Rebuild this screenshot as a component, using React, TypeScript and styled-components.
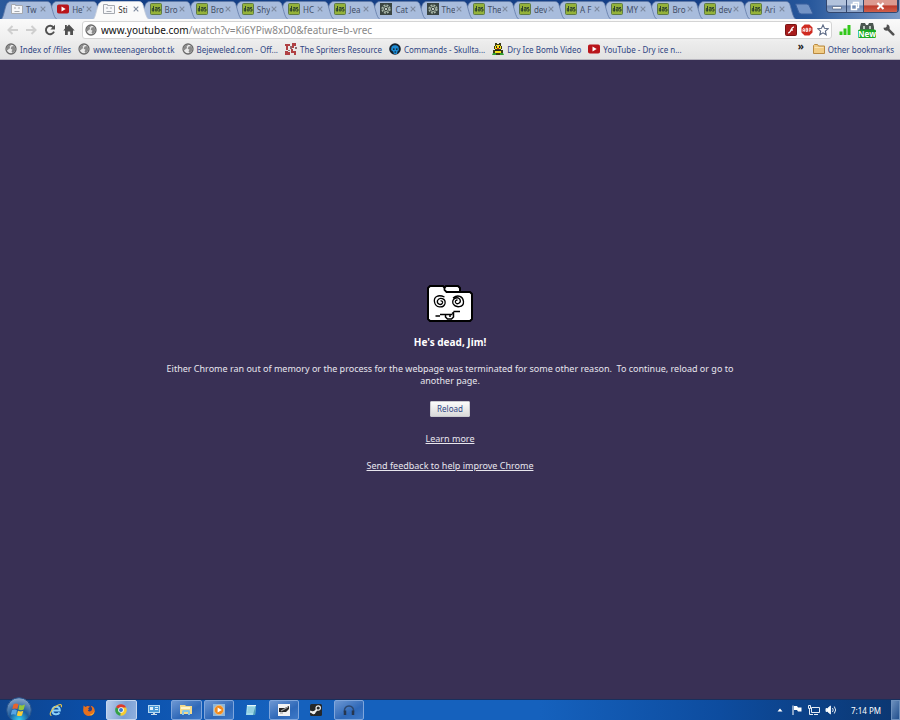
import React from "react";
import styled, { createGlobalStyle, css } from "styled-components";

const Global = createGlobalStyle`
  * { box-sizing: border-box; }
  body { margin: 0; font-family: "Noto Sans", "Open Sans", sans-serif; font-size: 8px; }
  button, input { font: inherit; }
  svg { display: block; flex: none; }
`;

const Window = styled.div`
  min-height: 100vh;
  display: flex;
  flex-direction: column;
  background: #393055;
`;

/* ---------- tab strip ---------- */
const TabStrip = styled.header`
  display: flex;
  align-items: flex-start;
  height: 19px;
  padding-left: 5px;
  background: linear-gradient(90deg, #2b5a9c 0, #133f85 8%, #153f86 80%, #28589c 90%, #7d9cc8 100%);
`;
const Tabs = styled.nav`
  display: flex;
  flex: 1;
  min-width: 0;
  isolation: isolate;
`;
const Tab = styled.button<{ $active?: boolean; $order: number }>`
  position: relative;
  z-index: ${(p) => (p.$active ? 100 : p.$order)};
  flex: 1 1 0;
  min-width: 0;
  height: 19px;
  display: flex;
  align-items: center;
  gap: 1px;
  padding: 0 5px 1px 6px;
  border: 0;
  background: none;
  color: ${(p) => (p.$active ? "#333" : "#414e66")};
  text-align: left;
`;
const TabShape = styled.svg`
  position: absolute;
  z-index: -1;
  inset: 1px -6px 0 -4px;
  width: calc(100% + 10px);
  height: 18px;
`;
const TabLabel = styled.span`
  flex: 1;
  min-width: 0;
  overflow: hidden;
  white-space: nowrap;
  padding-left: 2px;
`;
const NewTab = styled.button`
  width: 20px;
  height: 12px;
  margin: 3px 12px 0 4px;
  padding: 0;
  border: 0;
  background: none;
`;
const WindowButtons = styled.div`
  display: flex;
  height: 13px;
  margin-right: 1px;
  border: 1px solid #33476e;
  border-top: 0;
  border-radius: 0 0 4px 4px;
  overflow: hidden;
`;
const WindowButton = styled.button<{ $kind: "min" | "max" | "close" }>`
  display: grid;
  place-items: center;
  padding: 0;
  border: 0;
  border-right: 1px solid #33476e;
  width: ${(p) => (p.$kind === "close" ? 34 : p.$kind === "min" ? 20 : 17)}px;
  background: ${(p) =>
    p.$kind === "close"
      ? "linear-gradient(#dc9a90 0 40%, #bd3a2b 50%, #d0604c)"
      : "linear-gradient(#b3c3dc 0 40%, #6f88b2 50%, #92a8cb)"};
`;

/* ---------- toolbar ---------- */
const Toolbar = styled.div`
  display: flex;
  align-items: center;
  height: 22px;
  gap: 7px;
  padding: 0 5px 0 6px;
  background: linear-gradient(#fafafa, #eeeeee);
`;
const ToolButton = styled.button<{ $wide?: boolean }>`
  display: grid;
  place-items: center;
  width: ${(p) => (p.$wide ? 18 : 12)}px;
  height: 18px;
  padding: 0;
  border: 0;
  background: none;
`;
const Omnibox = styled.div`
  flex: 1;
  min-width: 0;
  height: 18px;
  display: flex;
  align-items: center;
  gap: 4px;
  padding: 0 2px;
  border: 1px solid #d4d4d4;
  border-radius: 3px;
  background: #fff;
`;
const AddressField = styled.label`
  position: relative;
  flex: 1;
  min-width: 0;
  height: 16px;
  font-size: 10px;
  line-height: 16px;
  white-space: nowrap;
  overflow: hidden;
  color: #888;
  b { font-weight: 400; color: #111; }
`;
const AddressInput = styled.input`
  position: absolute;
  inset: 0;
  width: 100%;
  border: 0;
  padding: 0;
  outline: 0;
  background: none;
  color: transparent;
`;

/* ---------- bookmarks ---------- */
const Bookmarks = styled.nav`
  display: flex;
  align-items: center;
  height: 19px;
  gap: 7px;
  padding: 0 6px 2px 5px;
  background: linear-gradient(#ededed, #e2e2e2);
  border-bottom: 1px solid #b8b6bf;
`;
const Bookmark = styled.a`
  display: flex;
  align-items: center;
  gap: 3px;
  color: #2f4583;
  text-decoration: none;
  white-space: nowrap;
`;
const Overflow = styled.button`
  margin-left: auto;
  padding: 0 2px 6px;
  border: 0;
  background: none;
  font-size: 10px;
  font-weight: 700;
  line-height: 10px;
  color: #222;
`;

/* ---------- page ---------- */
const Page = styled.main`
  flex: 1;
  display: flex;
  flex-direction: column;
  align-items: center;
  justify-content: center;
  padding: 5px 150px 0;
  color: #e8e6ee;
  font-size: 9px;
  text-align: center;
`;
const Title = styled.h1`
  margin: 13px 0 0;
  font-size: 10px;
  line-height: 14px;
  color: #fff;
`;
const Message = styled.p`
  margin: 14px 0 0;
  max-width: 580px;
  line-height: 12px;
  white-space: pre-wrap;
`;
const Reload = styled.button`
  margin: 14px 0 8px;
  height: 16px;
  padding: 0 6px;
  border: 1px solid #c9c9cf;
  border-radius: 1px;
  background: linear-gradient(#fbfbfb, #d9d9d9);
  color: #2f4583;
  font-size: 8px;
  line-height: 14px;
`;
const PageLink = styled.a`
  margin-top: 8px;
  padding-bottom: 7px;
  line-height: 12px;
  color: #e8e6ee;
`;

/* ---------- taskbar ---------- */
const Taskbar = styled.footer`
  display: flex;
  align-items: stretch;
  height: 21px;
  border-top: 1px solid #17305e;
  background: linear-gradient(90deg, #0d448f 0, #0b50ab 12%, #1561bd 30%, #1561bd 60%, #0d4c9f 80%, #0b3670 100%);
`;
const Start = styled.button`
  display: grid;
  place-items: center;
  width: 41px;
  padding: 0 4px 0 0;
  border: 0;
  background: none;
  > svg { margin: -3px 0; }
`;
const Apps = styled.div`
  display: flex;
  gap: 2px;
  width: 323px;
`;
const AppButton = styled.button<{ $state?: "open" | "active" }>`
  flex: 1;
  display: grid;
  place-items: center;
  padding: 0;
  border: 1px solid transparent;
  border-radius: 2px;
  background: none;
  ${(p) =>
    p.$state &&
    css`
      border-color: ${p.$state === "active" ? "#c3d5ef" : "#7fa6dc"};
      background: ${p.$state === "active"
        ? "linear-gradient(100deg, #b9cdea, #7b9fd4 60%, #8fb0de)"
        : "linear-gradient(150deg, #6d97d2, #2e68b8 60%, #3d79c8)"};
    `}
`;
const Tray = styled.div`
  display: flex;
  align-items: center;
  gap: 5px;
  margin-left: auto;
  color: #fff;
`;
const Clock = styled.time`
  margin: 0 5px 0 9px;
`;
const ShowDesktop = styled.button`
  align-self: stretch;
  width: 9px;
  padding: 0;
  border: 1px solid #6d90bd;
  background: linear-gradient(120deg, #6c8fbd, #214f8d);
`;

/* ---------- icons ---------- */
const Globe = () => (
  <svg width="12" height="12" viewBox="0 0 12 12">
    <circle cx="6" cy="6" r="5" fill="#e9e9e9" stroke="#6a6a6a" strokeWidth="1.300" />
    <path d="M2 3.500 4 1.800 6 2.300 4.500 3.800 5.300 5.200 3.800 5.800 2.600 7.500 1.500 6z" fill="#8a8a8a" />
    <path d="M6.500 3.500 9 3l1.500 2.500L9.800 8 7.500 10 6.500 8.200 7.500 6.800 5.800 5.800z" fill="#8a8a8a" />
  </svg>
);
const SadPage = () => (
  <svg width="12" height="12" viewBox="0 0 12 12" fill="none" stroke="#a5a9b0">
    <path d="M.5 10.500v-9h4v1h7v8z" fill="#f6f7f9" />
    <path d="M3 5h2M7 5h2M3.500 8.500h5" />
  </svg>
);
const Tube = () => (
  <svg width="12" height="12" viewBox="0 0 12 12">
    <rect y="1.500" width="12" height="9" rx="1.800" fill="#b9151b" />
    <path d="M4.500 3.500 8.700 6 4.500 8.500z" fill="#fff" />
  </svg>
);
const Deviant = () => (
  <svg width="12" height="12" viewBox="0 0 12 12">
    <rect x=".5" y=".5" width="11" height="11" rx="1" fill="#94b23a" stroke="#5d7a45" />
    <path d="M3.500 3v5.200M3.800 5.500H2.300v2.500h1.500" fill="none" stroke="#263b2f" strokeWidth=".9" />
    <path d="M5.200 4.500h2v3.400h-2V6h2M10 4.500H8.500V6H10v2H8.200" fill="none" stroke="#263b2f" strokeWidth=".9" />
  </svg>
);
const Gear = () => (
  <svg width="12" height="12" viewBox="0 0 12 12">
    <rect width="12" height="12" fill="#3a4541" />
    <circle cx="6" cy="6" r="3.900" fill="none" stroke="#a9b8a8" strokeWidth="1.500" strokeDasharray="2 1.060" />
    <circle cx="6" cy="6" r="2.600" fill="none" stroke="#a9b8a8" strokeWidth=".9" />
    <circle cx="6" cy="6" r="1.100" fill="#e2e8e2" />
  </svg>
);
const Close = () => (
  <svg width="6" height="6" viewBox="0 0 6 6" stroke="#7d899e" strokeWidth="1.100">
    <path d="m.7.7 4.600 4.600M5.300.7.7 5.300" />
  </svg>
);
const Arrow = ({ flip }: { flip?: boolean }) => (
  <svg width="11" height="10" viewBox="0 0 11 10" fill="none" stroke="#cfcfcf" strokeWidth="2">
    <path d={flip ? "M0 5h9M5.500 1l4 4-4 4" : "M11 5H2M5.500 1l-4 4 4 4"} />
  </svg>
);
const ReloadIcon = () => (
  <svg width="12" height="12" viewBox="0 0 12 12">
    <path d="M9.600 3.600A4.200 4.200 0 1 0 10 7.600" fill="none" stroke="#505050" strokeWidth="1.900" />
    <path d="M11 .8v4.600H6.400z" fill="#505050" />
  </svg>
);
const Home = () => (
  <svg width="12" height="12" viewBox="0 0 12 12" fill="#505050">
    <path d="M6 .5 11.700 6.400H10V11H7.200V7.500H4.800V11H2V6.400H.3L2 4.600V1h1.800v1.800z" />
  </svg>
);
const Flash = () => (
  <svg width="12" height="12" viewBox="0 0 12 12">
    <rect x=".5" y=".5" width="11" height="11" rx="1" fill="#a81c1c" stroke="#791414" />
    <path d="M9 2.800C6.500 3 6.500 5 5.600 7 5 8.300 4.300 8.800 3.200 9M5.700 6h2.200" fill="none" stroke="#fff" strokeWidth="1.300" />
  </svg>
);
const AdBlock = () => (
  <svg width="12" height="12" viewBox="0 0 12 12">
    <path d="M3.600.5h4.800l3.100 3v5l-3.100 3H3.600l-3.100-3v-5z" fill="#cf2a20" />
    <path d="M2 7.800V5l.8-.8.8.8v2.800M2 6.600h1.600M5 4.300v3.200h1.500V4.300H5M5 5.900h1.500M8.200 7.900V4.300h1.600v2H8.200" fill="none" stroke="#fff" strokeWidth=".8" />
  </svg>
);
const Star = () => (
  <svg width="12" height="12" viewBox="0 0 12 12">
    <path d="m6 .9 1.500 3.400 3.700.4-2.800 2.400.8 3.700L6 8.900l-3.200 1.900.8-3.700L.8 4.700l3.700-.4z" fill="#fff" stroke="#5c6a85" strokeWidth="1.100" />
  </svg>
);
const Bars = () => (
  <svg width="12" height="12" viewBox="0 0 12 12" fill="#32c81a">
    <path d="M.5 7.500h3V11h-3zM4.500 4.500h3V11h-3zM8.500 1h3v10h-3z" />
  </svg>
);
const NewBadge = () => (
  <svg width="18" height="17" viewBox="0 0 18 17">
    <path d="M3 1h4l1 2h2l1-2h4l1 4v4H2V5z" fill="#4b5650" />
    <path d="M5 4h2v3H5zM11 4h2v3h-2z" fill="#b9c4bd" />
    <rect y="7.500" width="18" height="8.500" rx="1.500" fill="#1bab24" />
    <text x="9" y="14.600" textAnchor="middle" fontSize="8" fontWeight="700" fill="#fff">New</text>
  </svg>
);
const Wrench = () => (
  <svg width="12" height="12" viewBox="0 0 12 12">
    <path d="M5 5.200 10.200 10.400" stroke="#505050" strokeWidth="2.600" strokeLinecap="round" />
    <path d="M3.800.5 3.600 2.800 2.800 3.600.5 3.800C.6 6 2.300 7 4.500 6.600L6.600 4.500C7 2.300 6 .6 3.800.5z" fill="#505050" />
  </svg>
);
const Sprite = () => (
  <svg width="12" height="12" viewBox="0 0 12 12">
    <path d="M0 1h5v2H3v4H1V3H0zM7 0h4v3H9v2H7zM0 8h3v1h2v3H0zM6 6h2v2h3v4H9v-2H6z" fill="#b04043" />
    <path d="M5 3h2v3H5zM3 7h2v1H3zM10 4h2v2h-2z" fill="#8d6c70" />
  </svg>
);
const Skull = () => (
  <svg width="12" height="12" viewBox="0 0 12 12">
    <circle cx="6" cy="6" r="5.800" fill="#15202b" />
    <path d="M2.500 4C3.500 1.500 8.500 1.500 9.500 4L10 7 8.500 8.500 8 11H5L4 8.500 2 7z" fill="#1c8ad2" />
    <path d="M4 5.500h1.500v1.300H4zM7 5.500h1.500v1.300H7zM5.500 8.500h1.500v1H5.500z" fill="#111" />
  </svg>
);
const Bee = () => (
  <svg width="12" height="12" viewBox="0 0 12 12">
    <path d="M3 0h2v1h2V0h2v3h1v3H9v1h2v4H8v1H4v-1H1V7h2V6H2V3h1z" fill="#3a3a18" />
    <path d="M4 2h4v1H4zM3 3h6v3H3zM3 7h6v3H3z" fill="#f3e11b" />
    <path d="M4 3h1v2H4zM7 3h1v2H7zM3 7h6v1H3z" fill="#222" />
    <path d="M5 5h2v1H5z" fill="#d7261b" />
    <path d="M1 10h3v2H0zM8 10h3l1 2H8z" fill="#2f9c2d" />
  </svg>
);
const Folder = () => (
  <svg width="12" height="12" viewBox="0 0 12 12">
    <path d="M.5 10.500v-8l1-1h3l1 1.500h6v7.500z" fill="#f1cc85" stroke="#b98a42" />
    <path d="M1.500 4.500h9" stroke="#fae3b3" />
  </svg>
);
const DeadFolder = () => (
  <svg width="46" height="37" viewBox="0 0 46 37">
    <path d="M3 1h13l1.500 1.500L19 1h12l2 2v4h10l2 2v25l-2 2H3l-2-2V3z" fill="#fff" stroke="#000" strokeWidth="2" strokeLinejoin="round" />
    <path d="M17.500 2v3l2 2H34" fill="none" stroke="#000" strokeWidth="1.800" />
    <g fill="none" stroke="#000" strokeWidth="1.300">
      <path d="M17.500 12C11 9 6.500 12 7.500 17c1 6 9 6.500 10.500 1.500 1-5-5.500-7-7.500-3-1 3.500 3.500 5.500 5 2.500.5-1.500-1-2.500-2-2" />
      <path d="M26 13c5-4 10-1.500 10.500 3.500.5 6-8 7-10.500 2-1.500-5 4.500-7.500 7-4 1.500 3.500-3 5.500-4.500 3-.5-1.500.5-2.500 2-2.500" />
      <path d="M8.500 31h4.500M13 29.500h12.500M26.500 26.500H33M25 28.500l2-1.500" strokeWidth="1.500" />
      <path d="M18.500 29.500v2.500l2 2h4l2-2v-4M23 29.500V32" strokeWidth="1.500" />
    </g>
  </svg>
);
const Orb = () => (
  <svg width="26" height="26" viewBox="0 0 26 26">
    <defs>
      <radialGradient id="orb" cx=".5" cy=".9" r=".9">
        <stop offset="0" stopColor="#35d0f2" />
        <stop offset=".45" stopColor="#1c5c9f" />
        <stop offset="1" stopColor="#8fa9c9" />
      </radialGradient>
    </defs>
    <circle cx="13" cy="13" r="12.300" fill="url(#orb)" stroke="#25528c" />
    <path d="M7.500 7.200c2-1 3.500-.8 5 .1l-1.200 4.800c-1.600-.8-3.200-.8-5 0z" fill="#e8622b" />
    <path d="M13.500 7.800c1.800.9 3.500.8 5.500-.2l-1.300 4.900c-1.900.9-3.500.9-5.300 0z" fill="#93c73d" />
    <path d="M6 13.200c1.800-.9 3.400-.8 5 0l-1.200 4.600c-1.600-.9-3.200-.9-5 0z" fill="#57a5e4" />
    <path d="M12 13.700c1.800.9 3.500.9 5.300 0L16 18.400c-1.800.9-3.500.9-5.200 0z" fill="#f8cc3a" />
  </svg>
);
const IE = () => (
  <svg width="14" height="14" viewBox="0 0 14 14" fill="none">
    <path d="M3.500 7.600h7.300C10.800 2.600 3.300 2.600 3.300 7.500c0 4.600 5.600 4.800 7.200 2" stroke="#8cd2f8" strokeWidth="2" />
    <path d="M2.500 12.500C-.5 12 2 6.500 7 3.200c4-2.600 6.500-2 5.200 1" stroke="#e6c34c" strokeWidth="1.100" />
  </svg>
);
const Fox = () => (
  <svg width="14" height="14" viewBox="0 0 14 14">
    <circle cx="7" cy="7" r="5" fill="#28408a" />
    <path d="M1.500 2.500 3.500 4c2-1.500 3-.8 4.500-.6L6 5.500c1.500.5 1 1.500-.2 2C7.500 9.500 10.500 8 10 5L8.600 2.800C11 3.300 12.800 5 12.700 8c-.4 6.200-10.300 6.800-11.400.5-.3-2 .2-3.500.2-6z" fill="#e8701c" />
    <path d="M12 5.500c1 3-1 6-4.500 6.300 2 1.500 6-.8 4.500-6.300z" fill="#f6bd3b" />
  </svg>
);
const ChromeIcon = () => (
  <svg width="12" height="12" viewBox="0 0 12 12">
    <path d="M6 6 .9 3.200A5.800 5.800 0 0 1 11.100 3.400z" fill="#dc3b2c" />
    <path d="M6 6 .9 3.200A5.800 5.800 0 0 0 5.500 11.800z" fill="#34a045" />
    <path d="M6 6 5.500 11.800A5.800 5.800 0 0 0 11.100 3.400H6z" fill="#f4cb32" />
    <circle cx="6" cy="6" r="2.800" fill="#fff" />
    <circle cx="6" cy="6" r="2" fill="#3975d0" />
  </svg>
);
const Control = () => (
  <svg width="12" height="12" viewBox="0 0 12 12">
    <rect x=".5" y="1.500" width="11" height="7" fill="#4c9ad7" stroke="#b7d8f0" />
    <path d="M5 9h2v1h2v1H3v-1h2z" fill="#c7d9e8" />
    <path d="M2 3h3v3H2zM7 3h3v1H7zM7 5h3v1H7z" fill="#e2f1fb" />
  </svg>
);
const Explorer = () => (
  <svg width="14" height="12" viewBox="0 0 14 12">
    <path d="M1 10V1h5l1 1h6v8z" fill="#f2d98b" />
    <path d="M2 3h9v2H2z" fill="#fff4c8" />
    <path d="M3 11V7l1-1h6l1 1v4H9V8H5v3z" fill="#85c6e8" />
  </svg>
);
const Player = () => (
  <svg width="12" height="12" viewBox="0 0 12 12">
    <path d="M0 0h12v12H0z" fill="#8eb8dc" />
    <circle cx="6" cy="6" r="4.700" fill="#f18a1b" stroke="#fbd3a0" strokeWidth=".6" />
    <path d="M4.600 3.400 8.800 6 4.600 8.600z" fill="#fff" />
  </svg>
);
const Notes = () => (
  <svg width="12" height="12" viewBox="0 0 12 12">
    <path d="M2 1h9l-1 10H1z" fill="#a2dceb" />
    <path d="M2 1h9v1H2z" fill="#e5f6fa" />
    <path d="M3 4h6M3 6h6M2.500 8H9" stroke="#75b7cb" strokeWidth=".7" />
    <path d="m10 3 1-1-1 9H8z" fill="#4f9eb7" />
  </svg>
);
const Tape = () => (
  <svg width="12" height="12" viewBox="0 0 12 12">
    <path d="M0 0h12v12H0z" fill="#f2f2f2" />
    <path d="M1 4h6l4-2v3L8 8H1z" fill="#252525" />
    <path d="m3 7 7-4M2 9h3" stroke="#999" strokeWidth="1.200" />
  </svg>
);
const Steam = () => (
  <svg width="12" height="12" viewBox="0 0 12 12">
    <rect width="12" height="12" rx="1.500" fill="#252729" />
    <path d="M0 7.500 3.500 9 7.500 5" fill="none" stroke="#eee" strokeWidth="2" />
    <circle cx="8.200" cy="4" r="2.200" fill="#252729" stroke="#eee" strokeWidth="1.200" />
    <circle cx="3.700" cy="8.600" r="1.700" fill="#eee" />
  </svg>
);
const Phones = () => (
  <svg width="14" height="12" viewBox="0 0 14 12" fill="none">
    <path d="M2.500 8C1 0 13 0 11.500 8" stroke="#2d486f" strokeWidth="1.500" />
    <path d="M3 6.500v4.500M11 6.500v4.500" stroke="#26364f" strokeWidth="2.500" />
  </svg>
);

const icons: Record<string, React.FC> = { sad: SadPage, tube: Tube, da: Deviant, gear: Gear };
const tabs: [string, string][] = [
  ["Tw", "sad"], ["He'", "tube"], ["Sti", "sad"], ["Bro", "da"], ["Bro", "da"], ["Shy", "da"],
  ["HC", "da"], ["Jea", "da"], ["Cat", "gear"], ["The", "gear"], ["The", "da"], ["dev", "da"],
  ["A F", "da"], ["MY", "da"], ["Bro", "da"], ["dev", "da"], ["Ari", "da"],
];
const bookmarks: [string, React.FC][] = [
  ["Index of /files", Globe],
  ["www.teenagerobot.tk", Globe],
  ["Bejeweled.com - Off...", Globe],
  ["The Spriters Resource", Sprite],
  ["Commands - Skullta...", Skull],
  ["Dry Ice Bomb Video", Bee],
  ["YouTube - Dry ice n...", Tube],
];
const apps: [string, React.FC, ("open" | "active")?][] = [
  ["Internet Explorer", IE],
  ["Firefox", Fox],
  ["Chrome", ChromeIcon, "active"],
  ["Control Panel", Control],
  ["Explorer", Explorer, "open"],
  ["Media Player", Player, "open"],
  ["Notepad", Notes],
  ["Video editor", Tape, "open"],
  ["Steam", Steam],
  ["Audio", Phones, "open"],
];

export default function App() {
  return (
    <Window>
      <Global />
      <TabStrip>
        <Tabs aria-label="Tabs">
          {tabs.map(([label, icon], i) => {
            const Icon = icons[icon];
            const active = i === 2;
            return (
              <Tab key={i} $active={active} $order={tabs.length - i}>
                <TabShape viewBox="0 0 56 18" preserveAspectRatio="none">
                  <path
                    d="M0 18.500C3 17 4 3 7 1.500Q8 .5 10 .5H46Q48 .5 49 2C51 5 52 17 56 18.500"
                    fill={active ? "#fafafa" : "#a8bcdc"}
                    stroke={active ? "#c5cddb" : "#627ba8"}
                    strokeWidth=".8"
                  />
                </TabShape>
                <Icon />
                <TabLabel>{label}</TabLabel>
                <Close />
              </Tab>
            );
          })}
        </Tabs>
        <NewTab aria-label="New tab">
          <svg width="20" height="12" viewBox="0 0 20 12">
            <path d="M1.500 1h11.500l2 1 4 9H7L5 10z" fill="#7393c5" stroke="#385e9d" />
          </svg>
        </NewTab>
        <WindowButtons>
          <WindowButton $kind="min" aria-label="Minimize">
            <svg width="10" height="8" viewBox="0 0 10 8"><path d="M.5 4.500h9v2.500h-9z" fill="#fff" stroke="#50617f" strokeWidth=".7" /></svg>
          </WindowButton>
          <WindowButton $kind="max" aria-label="Restore">
            <svg width="10" height="10" viewBox="0 0 10 10" fill="none" stroke="#fff" strokeWidth="1.500"><path d="M3.500 3V1.500h5v5H7M1.500 3.500h5v5h-5z" /></svg>
          </WindowButton>
          <WindowButton $kind="close" aria-label="Close">
            <svg width="9" height="8" viewBox="0 0 9 8" stroke="#fff" strokeWidth="2"><path d="m1.500 1 6 6m0-6-6 6" /></svg>
          </WindowButton>
        </WindowButtons>
      </TabStrip>

      <Toolbar>
        <ToolButton aria-label="Back"><Arrow /></ToolButton>
        <ToolButton aria-label="Forward"><Arrow flip /></ToolButton>
        <ToolButton aria-label="Reload page"><ReloadIcon /></ToolButton>
        <ToolButton aria-label="Home"><Home /></ToolButton>
        <Omnibox>
          <Globe />
          <AddressField>
            <b>www.youtube.com</b>/watch?v=Ki6YPiw8xD0&amp;feature=b-vrec
            <AddressInput type="text" aria-label="Address" />
          </AddressField>
          <ToolButton aria-label="Flash"><Flash /></ToolButton>
          <ToolButton aria-label="AdBlock"><AdBlock /></ToolButton>
          <ToolButton aria-label="Bookmark this page"><Star /></ToolButton>
        </Omnibox>
        <ToolButton aria-label="Signal"><Bars /></ToolButton>
        <ToolButton $wide aria-label="New extension"><NewBadge /></ToolButton>
        <ToolButton aria-label="Settings"><Wrench /></ToolButton>
      </Toolbar>

      <Bookmarks aria-label="Bookmarks">
        {bookmarks.map(([label, Icon]) => (
          <Bookmark href="#" key={label}><Icon />{label}</Bookmark>
        ))}
        <Overflow aria-label="More bookmarks">»</Overflow>
        <Bookmark href="#"><Folder />Other bookmarks</Bookmark>
      </Bookmarks>

      <Page>
        <DeadFolder />
        <Title>He's dead, Jim!</Title>
        <Message>
          {"Either Chrome ran out of memory or the process for the webpage was terminated for some other reason.  To continue, reload or go to another page."}
        </Message>
        <Reload>Reload</Reload>
        <PageLink href="#">Learn more</PageLink>
        <PageLink href="#">Send feedback to help improve Chrome</PageLink>
      </Page>

      <Taskbar>
        <Start aria-label="Start"><Orb /></Start>
        <Apps>
          {apps.map(([name, Icon, state]) => (
            <AppButton key={name} $state={state} aria-label={name}><Icon /></AppButton>
          ))}
        </Apps>
        <Tray>
          <svg width="12" height="12" viewBox="0 0 12 12" fill="#fff"><path d="M3.500 7.500h5L6 4.500z" /></svg>
          <svg width="12" height="12" viewBox="0 0 12 12" fill="#fff"><path d="M1.500 1.500h1V11h-1zM3 2h3l1 1.500h3.500v4H7L6 6H3z" /></svg>
          <svg width="12" height="12" viewBox="0 0 12 12" fill="none" stroke="#e6edf5"><path d="M3.500 3.500h8v5h-8zM6 10.500h4M1.500 5v5.500H5M.5 1.500h2v3h-2z" /></svg>
          <svg width="12" height="12" viewBox="0 0 12 12" fill="none" stroke="#e6edf5"><path d="M1 4.500h1.500L5.500 2v8L2.500 7.500H1z" fill="#fff" /><path d="M7.500 4q1.500 2 0 4M9.300 2.500q2.700 3.500 0 7" /></svg>
          <Clock>7:14 PM</Clock>
          <ShowDesktop aria-label="Show desktop" />
        </Tray>
      </Taskbar>
    </Window>
  );
}
